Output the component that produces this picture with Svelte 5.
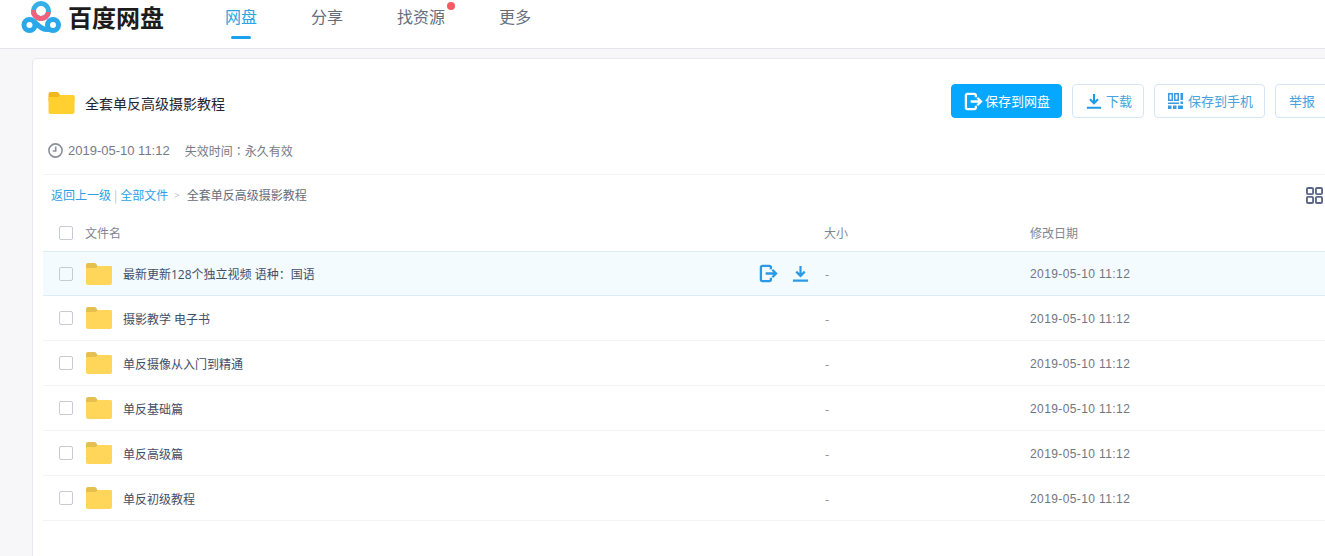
<script>
	const rows = [
		{ name: '最新更新128个独立视频 语种：国语', hover: true },
		{ name: '摄影教学 电子书' },
		{ name: '单反摄像从入门到精通' },
		{ name: '单反基础篇' },
		{ name: '单反高级篇' },
		{ name: '单反初级教程' }
	];
	const nav = ['网盘', '分享', '找资源', '更多'];
	const date = '2019-05-10 11:12';
</script>

{#snippet folder(w, h, body, tab)}
	<svg class="folder" width={w} height={h} viewBox="0 0 26 22">
		<path fill={tab} d="M0 2a2 2 0 0 1 2-2h6.5a2 2 0 0 1 1.6.8L11.5 3H24a2 2 0 0 1 2 2v4H0Z" />
		<path fill={body} d="M0 5.5a.5.5 0 0 1 .5-.5H10l1.5-2H24a2 2 0 0 1 2 2v15a2 2 0 0 1-2 2H2a2 2 0 0 1-2-2Z" />
	</svg>
{/snippet}

{#snippet saveIcon(size, color)}
	<svg width={size} height={size} viewBox="0 0 20 20" fill="none" stroke={color} stroke-width="2.4">
		<path d="M12.5 5.5V3.6A1.6 1.6 0 0 0 10.9 2H3.6A1.6 1.6 0 0 0 2 3.6v12.8A1.6 1.6 0 0 0 3.6 18h7.3a1.6 1.6 0 0 0 1.6-1.6v-1.9" />
		<path d="M7 10h11M14 6l4 4-4 4" />
	</svg>
{/snippet}

{#snippet downIcon(size, color)}
	<svg width={size} height={size} viewBox="0 0 18 18" fill="none" stroke={color} stroke-width="2.3">
		<path d="M9 1v10M4.5 7 9 11.5 13.5 7M1 16.5h16" />
	</svg>
{/snippet}

<div class="page">
	<header>
		<div class="logo">
			<svg width="41" height="34" viewBox="21 0 41 34" fill="none" stroke-width="5" stroke-linecap="round">
				<circle cx="29.5" cy="25" r="5.5" stroke="#2aa8ea" />
				<circle cx="53" cy="25" r="5.5" stroke="#2aa8ea" />
				<path d="M34 21.5C38 25 42 30.5 49 29.5" stroke="#2aa8ea" />
				<circle cx="41" cy="11" r="7.5" stroke="#36aee8" />
				<path d="M33.5 10A7.5 7.5 0 0 0 48.5 12" stroke="#f0627c" stroke-linecap="butt" />
			</svg>
			<span class="brand">百度网盘</span>
		</div>
		<nav>
			{#each nav as item, i}
				<span class="nav-item" class:active={i === 0}>
					{item}
					{#if i === 2}<i class="dot"></i>{/if}
				</span>
			{/each}
		</nav>
	</header>

	<main class="card">
		<div class="title-row">
			<div class="title">
				{@render folder(27, 22, '#ffd02f', '#f2b81e')}
				<span>全套单反高级摄影教程</span>
			</div>
			<div class="actions">
				<button class="btn primary">
					{@render saveIcon(19, '#fff')}
					保存到网盘
				</button>
				<button class="btn dl">
					{@render downIcon(16, '#1e9be8')}
					下载
				</button>
				<button class="btn phone">
					<svg width="16" height="16" viewBox="0 0 16 16" fill="#3a9be0">
						<path d="M0 0h5v8H0zM6 0h5v8H6zM1.5 1.5v5h2v-5zM7.5 1.5v5h2v-5z" fill-rule="evenodd" />
						<path d="M12.5 0H15v7h-2.5zM12.5 8.5H15V11h-2.5zM0 9.5h11V11H0zM0 12.5h3.5V16H0zM5 12.5h3.5V16H5zM10 12.5h5V16h-5z" />
					</svg>
					保存到手机
				</button>
				<button class="btn report">举报</button>
			</div>
		</div>

		<div class="meta">
			<svg width="15" height="15" viewBox="0 0 15 15" fill="none" stroke="#8a8f99" stroke-width="1.6">
				<circle cx="7.5" cy="7.5" r="6.6" />
				<path d="M7.7 3.6v4.4H4.8" />
			</svg>
			<span class="meta-date">{date}</span>
			<span class="expire">失效时间<span class="tc">：</span>永久有效</span>
		</div>

		<div class="crumbs">
			<span class="path">
				<a href="#back">返回上一级</a>
				<span class="sep">|</span>
				<a href="#all">全部文件</a>
				<span class="gt">&gt;</span>
				<span>全套单反高级摄影教程</span>
			</span>
			<svg width="17" height="17" viewBox="0 0 18 18" fill="none" stroke="#5b6788" stroke-width="2">
				<rect x="1" y="1" width="6.5" height="6.5" rx="1.2" />
				<rect x="10.5" y="1" width="6.5" height="6.5" rx="1.2" />
				<rect x="1" y="10.5" width="6.5" height="6.5" rx="1.2" />
				<rect x="10.5" y="10.5" width="6.5" height="6.5" rx="1.2" />
			</svg>
		</div>

		<div class="list">
			<div class="row head">
				<span class="check"></span>
				<span class="name">文件名</span>
				<span class="size">大小</span>
				<span class="mtime">修改日期</span>
			</div>
			{#each rows as row}
				<div class="row item" class:hover={row.hover}>
					<span class="check"></span>
					{@render folder(26, 22, '#ffd659', '#e5bf50')}
					<span class="name">{row.name}</span>
					{#if row.hover}
						<span class="row-tools">
							{@render saveIcon(19, '#2a9ae6')}
							{@render downIcon(17, '#2a9ae6')}
						</span>
					{/if}
					<span class="size">-</span>
					<span class="mtime num">{date}</span>
				</div>
			{/each}
		</div>
	</main>
</div>

<style>
	:global(body) {
		margin: 0;
		overflow: hidden;
	}
	.page {
		width: 1325px;
		height: 556px;
		overflow: hidden;
		background: #f7f7f9;
		font-family: "Noto Sans CJK SC", "Liberation Sans", sans-serif;
		font-size: 12px;
		color: #424e67;
	}
	header {
		display: flex;
		align-items: flex-start;
		height: 48px;
		background: #fff;
		border-bottom: 1px solid #e3e5ec;
		padding-left: 21px;
	}
	.logo {
		display: flex;
		align-items: center;
		gap: 6px;
		height: 34px;
	}
	.brand {
		font-size: 24px;
		font-weight: 700;
		line-height: 32px;
		color: #1c1c1c;
	}
	nav {
		display: flex;
		gap: 54px;
		margin-left: 61px;
	}
	.nav-item {
		position: relative;
		font-size: 16px;
		line-height: 32px;
		color: #666e7c;
		height: 39px;
	}
	.nav-item.active {
		color: #2ba4e0;
	}
	.nav-item.active::after {
		content: "";
		position: absolute;
		left: 6px;
		right: 6px;
		bottom: 0;
		height: 3px;
		border-radius: 2px;
		background: #1ba2ea;
	}
	.dot {
		position: absolute;
		right: -10px;
		top: 2px;
		width: 8px;
		height: 8px;
		border-radius: 50%;
		background: #f25c62;
	}
	.card {
		width: 1320px;
		height: 520px;
		margin: 9px 0 0 32px;
		background: #fff;
		border: 1px solid #e8e9ee;
		border-radius: 4px;
		box-sizing: border-box;
		padding: 0 0 0 10px;
	}
	.title-row {
		display: flex;
		align-items: center;
		justify-content: space-between;
		height: 34px;
		margin-top: 25px;
		padding-left: 5px;
	}
	.title {
		display: flex;
		align-items: center;
		gap: 10px;
		margin-top: 4px;
		font-size: 14px;
		color: #1f2633;
	}
	.actions {
		display: flex;
		gap: 10px;
		margin-right: 18px;
	}
	.btn {
		display: flex;
		flex: none;
		align-items: center;
		gap: 4px;
		height: 34px;
		padding: 0 0 0 13px;
		background: #fff;
		border: 1px solid #d6e6f5;
		border-radius: 4px;
		font: inherit;
		font-size: 13px;
		line-height: 32px;
		white-space: nowrap;
		color: #47a2e0;
	}
	.btn.primary {
		width: 111px;
		gap: 2px;
		padding-left: 12px;
		background: #06a7ff;
		border-color: #06a7ff;
		color: #fff;
	}
	.btn.dl {
		width: 72px;
	}
	.btn.phone {
		width: 111px;
	}
	.btn.report {
		width: 58px;
	}
	.meta {
		display: flex;
		align-items: center;
		height: 18px;
		margin-top: 23px;
		padding-left: 5px;
		color: #757b86;
	}
	.meta-date {
		margin-left: 5px;
		font-family: "Liberation Sans", sans-serif;
		font-size: 13px;
	}
	.expire {
		margin-left: 15px;
	}
	.tc {
		font-family: "Noto Sans CJK TC", sans-serif;
	}
	.crumbs {
		display: flex;
		align-items: center;
		justify-content: space-between;
		height: 40px;
		margin-top: 15px;
		padding: 0 28px 0 8px;
		border-top: 1px solid #f4f5f7;
		color: #666e7c;
	}
	.path {
		display: flex;
		gap: 3px;
	}
	.path a {
		color: #2f9fe4;
		text-decoration: none;
	}
	.sep {
		color: #b4c4d4;
	}
	.gt {
		margin: 0 4px 0 3px;
		color: #c4c8d0;
		font-size: 10px;
		line-height: 18px;
	}
	.row {
		display: flex;
		align-items: center;
		position: relative;
		padding-left: 16px;
	}
	.row.head {
		height: 36px;
		padding-bottom: 1px;
		box-sizing: border-box;
		color: #81868f;
	}
	.row.head .name {
		margin-left: 12px;
	}
	.item {
		height: 45px;
		box-sizing: border-box;
		padding-top: 1px;
		border-bottom: 1px solid #f2f3f6;
		color: #424e67;
	}
	.item.hover {
		padding-top: 0;
		background: #f4fbff;
		border-top: 1px solid #dbedf7;
		border-bottom: 1px solid #dbedf7;
	}
	.check {
		flex: none;
		width: 12px;
		height: 12px;
		border: 1px solid #c8cbd2;
		border-radius: 2px;
	}
	.item:not(.hover) .check,
	.item:not(.hover) .folder {
		margin-top: -2px;
	}
	.item .folder {
		margin-left: 13px;
	}
	.item .name {
		margin-left: 11px;
		font-family: "Open Sans", "Noto Sans CJK SC", sans-serif;
	}
	.row-tools {
		position: absolute;
		left: 716px;
		display: flex;
		align-items: center;
		gap: 14px;
	}
	.size {
		position: absolute;
		left: 781px;
		color: #81868f;
	}
	.item .size {
		left: 782px;
	}
	.mtime {
		position: absolute;
		left: 987px;
		color: #81868f;
	}
	.num {
		font-family: "Liberation Sans", sans-serif;
		letter-spacing: 0.4px;
		color: #6f7683;
	}
</style>
